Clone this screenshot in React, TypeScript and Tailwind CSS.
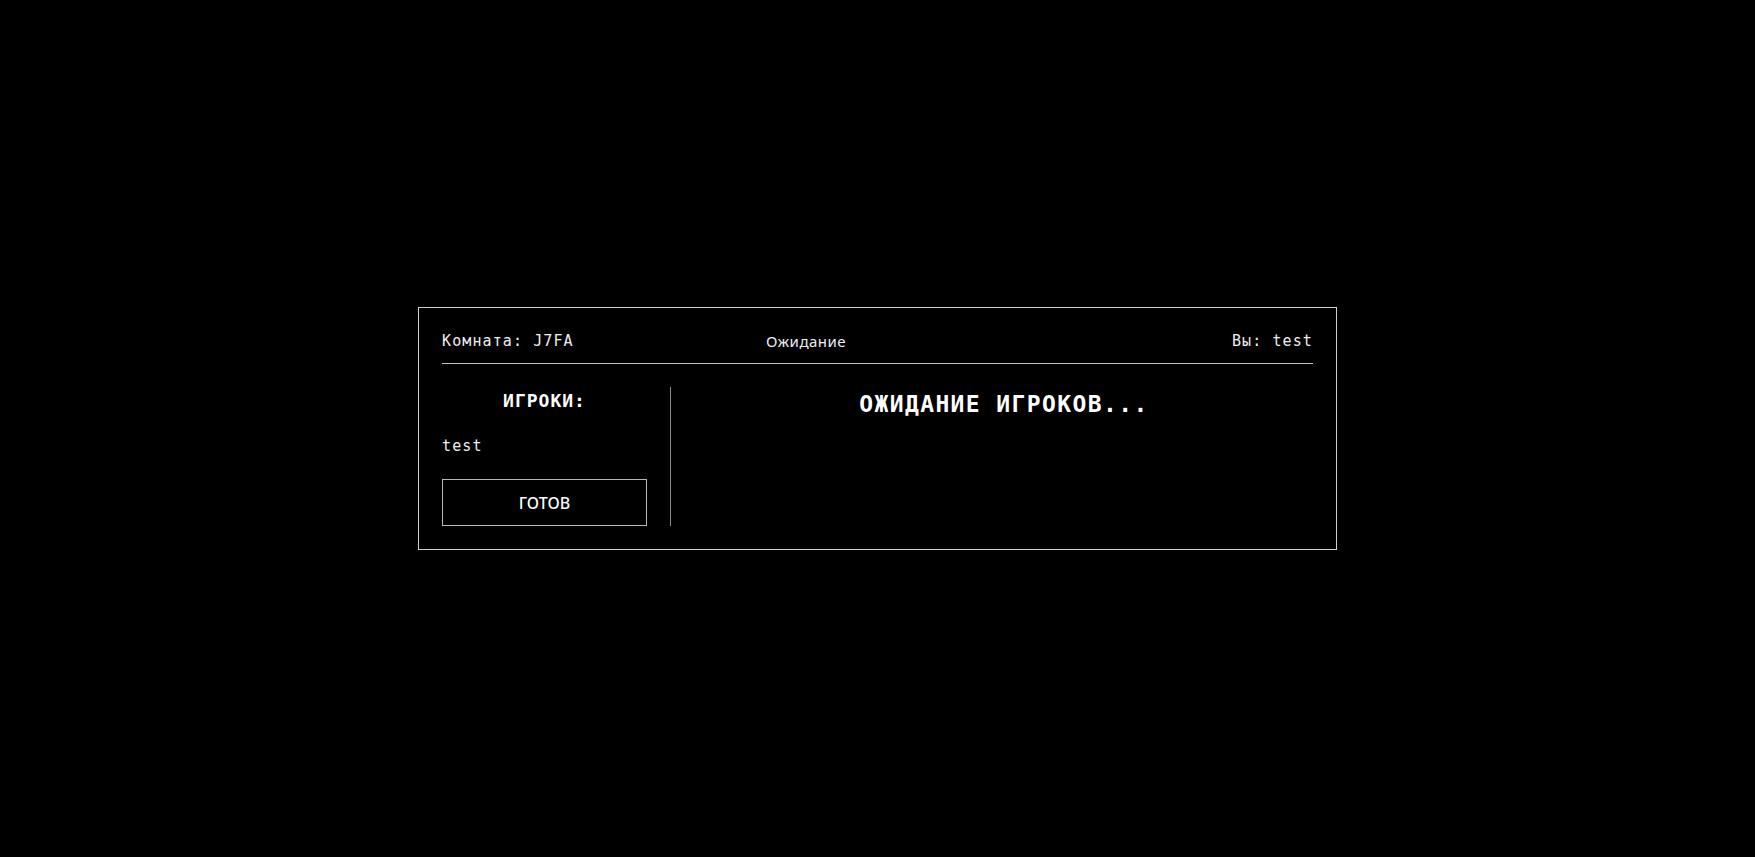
import React, { useState } from 'react';

const players = ['test'];

const App: React.FC = () => {
  const [ready, setReady] = useState(false);

  return (
    <div className="min-h-screen w-full bg-black flex items-center justify-center font-['DejaVu_Sans_Mono',monospace] text-[#eeeeee]">
      <div className="w-[919px] border border-[#cfcfcf] p-[23px]">
        {/* header */}
        <div className="flex items-center border-b border-[#c4c4c4] pb-3 text-[15px] leading-5 tracking-[1.1px]">
          <div className="w-[324px] shrink-0">Комната: J7FA</div>
          <div className="font-['Noto_Sans',sans-serif] text-[15px] tracking-[0.5px]">Ожидание</div>
          <div className="ml-auto">Вы: test</div>
        </div>

        {/* body */}
        <div className="mt-[23px] flex">
          <div className="w-[229px] shrink-0 border-r border-[#8a8a8a] pr-[23px]">
            <h2 className="text-center text-[18px] leading-7 font-bold tracking-[1px] text-white">ИГРОКИ:</h2>
            <ul className="mt-[21px]">
              {players.map((p) => (
                <li key={p} className="text-[15px] leading-5 tracking-[1.1px]">
                  {p}
                </li>
              ))}
            </ul>
            <button
              className="mt-[23px] flex h-[47px] w-full items-center justify-center border border-[#b8b8b8] bg-black font-['Noto_Sans',sans-serif] text-[16px] font-medium text-white"
              onClick={() => setReady(!ready)}
            >
              {ready ? 'НЕ ГОТОВ' : 'ГОТОВ'}
            </button>
          </div>
          <div className="flex-1 pl-[24px]">
            <h1 className="text-center text-[23px] leading-[34px] font-bold tracking-[1.4px] text-white">
              ОЖИДАНИЕ ИГРОКОВ...
            </h1>
          </div>
        </div>
      </div>
    </div>
  );
};

export default App;
